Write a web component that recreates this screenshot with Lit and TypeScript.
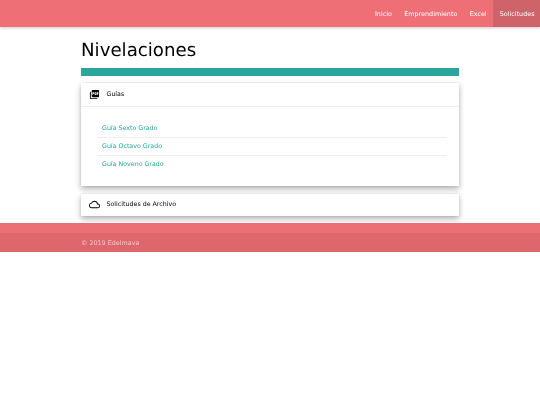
import { LitElement, html, css } from "lit";
import { customElement } from "lit/decorators.js";

@customElement("app-root")
export class AppRoot extends LitElement {
  static styles = css`
    :host { display: block; font-family: "DejaVu Sans", sans-serif; background: #fff; color: #000; text-rendering: geometricPrecision; will-change: transform; }
    nav { height: 27px; background: #ef6f76; display: flex; justify-content: flex-end; box-shadow: 0 1px 3px rgba(0,0,0,.2); font-size: 6.4px; position: relative; }
    nav a { color: #fff; padding: 0 6.2px; display: flex; align-items: center; }
    nav a.active { background: #cf636a; padding: 0 5.5px 0 7px; }
    main { width: 378px; margin: 0 auto; }
    h1 { margin: 0; height: 41px; padding-top: 14px; box-sizing: border-box; font-weight: 400; font-size: 18.2px; line-height: 20px; color: #000; }
    .bar { height: 8px; background: #2aa79b; margin-bottom: 7px; }
    .card { background: #fff; box-shadow: 0 3px 6px rgba(0,0,0,.3), 0 0 2px rgba(0,0,0,.1); margin-bottom: 8px; }
    .card:last-child { margin-bottom: 7.5px; }
    .head { height: 22px; display: flex; align-items: center; gap: 7px; padding-left: 7.500px; font-size: 6.3px; color: #000; }
    .head svg { width: 11px; height: 11px; flex: none; }
    .open .head { height: 23px; border-bottom: 1px solid #eee; }
    .body { padding: 12.5px 12px 10px 16px; height: 78.5px; box-sizing: border-box; }
    .body a { display: flex; align-items: center; height: 18.2px; padding-left: 5px; font-size: 6.3px; color: #26a69a; border-bottom: 1px solid #eee; box-sizing: border-box; }
    .body a:last-child { border-bottom: 0; }
    footer { background: #ec6f76; height: 29px; padding-top: 10px; box-sizing: border-box; }
    .copy { height: 19px; background: #de666d; color: #f8c8cb; font-size: 6.4px; display: flex; align-items: center; padding-left: 81px; }
  `;

  render() {
    return html`
      <nav>
        <a>Inicio</a><a>Emprendimiento</a><a>Excel</a><a class="active">Solicitudes</a>
      </nav>
      <main>
        <h1>Nivelaciones</h1>
        <div class="bar"></div>
        <section class="card open">
          <div class="head">
            <svg viewBox="0 0 24 24"><path d="M20 2H8c-1.100 0-2 .9-2 2v12c0 1.100.9 2 2 2h12c1.100 0 2-.9 2-2V4c0-1.100-.9-2-2-2zm-8.500 7.500c0 .83-.67 1.500-1.500 1.500H9v2H7.500V7H10c.83 0 1.500.67 1.500 1.500v1zm5 2c0 .83-.67 1.500-1.500 1.500h-2.500V7H15c.83 0 1.500.67 1.500 1.500v3zm4-3H19v1h1.500V11H19v2h-1.500V7h3v1.500zM9 9.500h1v-1H9v1zM4 6H2v14c0 1.100.9 2 2 2h14v-2H4V6zm10 5.500h1v-3h-1v3z"/></svg>
            <span>Guías</span>
          </div>
          <div class="body">
            <a>Guía Sexto Grado</a>
            <a>Guía Octavo Grado</a>
            <a>Guía Noveno Grado</a>
          </div>
        </section>
        <section class="card">
          <div class="head">
            <svg viewBox="0 0 24 24"><path d="M19.350 10.040A7.490 7.490 0 0 0 12 4C9.110 4 6.600 5.640 5.350 8.040A5.994 5.994 0 0 0 0 14c0 3.310 2.690 6 6 6h13c2.760 0 5-2.240 5-5 0-2.640-2.050-4.780-4.650-4.960zM19 18H6c-2.210 0-4-1.790-4-4s1.790-4 4-4h.71C7.370 7.690 9.480 6 12 6c3.040 0 5.500 2.460 5.500 5.500v.5H19c1.660 0 3 1.340 3 3s-1.340 3-3 3z"/></svg>
            <span>Solicitudes de Archivo</span>
          </div>
        </section>
      </main>
      <footer>
        <div class="copy">© 2019 Edelmava</div>
      </footer>
    `;
  }
}
